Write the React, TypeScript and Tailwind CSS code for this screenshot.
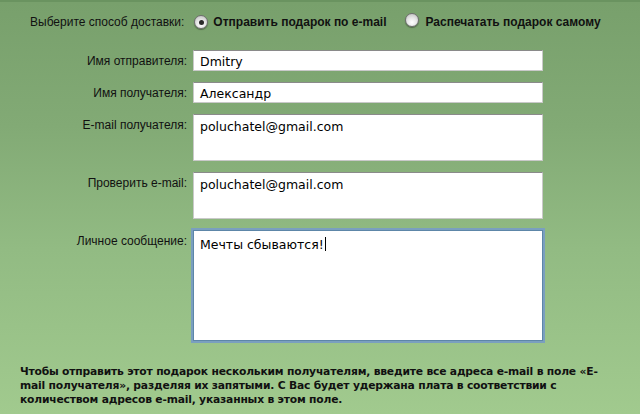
import React from "react";

const labelCls =
  "text-right text-[12px] leading-[14px] text-[#111] font-['Liberation_Sans',Arial,sans-serif]";
const valueCls =
  "text-[12.5px] leading-[15px] text-black font-['DejaVu_Sans','Noto_Sans',sans-serif]";

function Radio({ checked }: { checked?: boolean }) {
  return (
    <span className="relative inline-flex h-[14px] w-[14px] items-center justify-center rounded-full border border-[#6f6f6f] bg-[radial-gradient(circle_at_50%_70%,#ffffff_0%,#e6e6e6_45%,#b9b9b9_100%)] shadow-[0_1px_1px_rgba(0,0,0,0.35)]">
      {checked && <span className="h-[5px] w-[5px] rounded-full bg-[#2a2a2a]" />}
    </span>
  );
}

function Box({ value, tall, focus }: { value: string; tall?: "sm" | "lg"; focus?: boolean }) {
  const h = tall === "lg" ? "h-[111px]" : tall === "sm" ? "h-[47px]" : "h-[21px]";
  const pad = tall ? "pt-[4px]" : "pt-[3px]";
  const border = focus
    ? "border border-[#5d86a8] shadow-[0_0_0_2px_#7a9fbf]"
    : "border border-[#c9c9c9] border-t-[#8a8a8a]";
  return (
    <div className={`w-[350px] bg-white ${h} ${border} pl-[6px] ${pad} ${valueCls}`}>
      {value}
      {focus && <span className="ml-[1px] inline-block h-[14px] w-[1px] translate-y-[2px] bg-black" />}
    </div>
  );
}

export default function App() {
  return (
    <div className="flex h-[414px] w-[640px] flex-col border-t-2 border-[#6a9360] bg-[linear-gradient(to_bottom,#78a06c_0%,#82aa75_30%,#92bb83_60%,#a1ca8e_100%)]">
      <div className="flex items-center pl-[30px] pt-[11px] text-[12px] leading-[14px] text-[#111] font-['Liberation_Sans',Arial,sans-serif]">
        <span>Выберите способ доставки:</span>
        <span className="ml-[10px]"><Radio checked /></span>
        <span className="ml-[5px] font-bold">Отправить подарок по e-mail</span>
        <span className="ml-[19px]"><Radio /></span>
        <span className="ml-[6px] font-bold">Распечатать подарок самому</span>
      </div>

      <div className="mt-[20px] grid grid-cols-[187px_350px] gap-x-[6px] gap-y-[11px]">
        <div className={`${labelCls} pt-[4px]`}>Имя отправителя:</div>
        <Box value="Dmitry" />
        <div className={`${labelCls} pt-[4px]`}>Имя получателя:</div>
        <Box value="Александр" />
        <div className={`${labelCls} pt-[4px]`}>E-mail получателя:</div>
        <Box value="poluchatel@gmail.com" tall="sm" />
        <div className={`${labelCls} pt-[4px]`}>Проверить e-mail:</div>
        <Box value="poluchatel@gmail.com" tall="sm" />
        <div className={`${labelCls} pt-[4px]`}>Личное сообщение:</div>
        <Box value="Мечты сбываются!" tall="lg" focus />
      </div>

      <p className="mt-[24px] pl-[20px] text-[10.75px] font-bold leading-[14px] text-[#111] font-['DejaVu_Sans','Noto_Sans',sans-serif] tracking-[-0.2px]">
        <span className="whitespace-nowrap">Чтобы отправить этот подарок нескольким получателям, введите все адреса e-mail в поле «E-</span>
        <br />
        <span className="whitespace-nowrap">mail получателя», разделяя их запятыми. С Вас будет удержана плата в соответствии с</span>
        <br />
        <span className="whitespace-nowrap">количеством адресов e-mail, указанных в этом поле.</span>
      </p>
    </div>
  );
}
